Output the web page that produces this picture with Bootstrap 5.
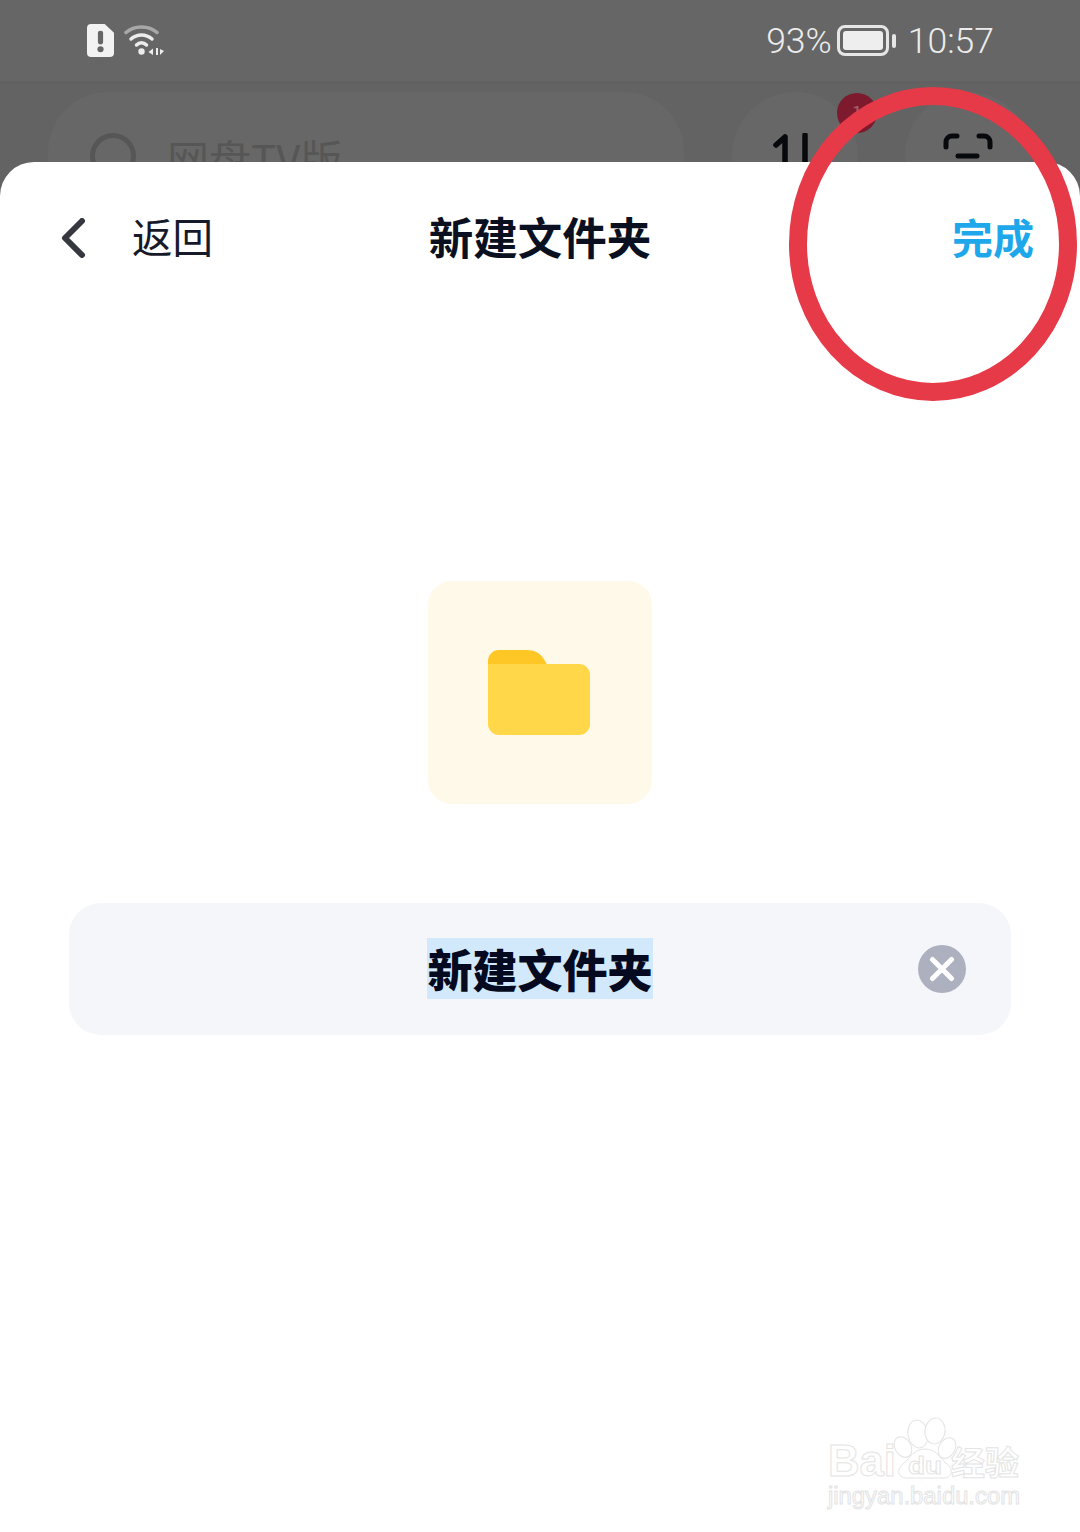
<!DOCTYPE html>
<html lang="zh-CN">
<head>
  <meta charset="UTF-8" />
  <title>新建文件夹</title>
  <link href="https://cdn.jsdelivr.net/npm/bootstrap@5.3.0/dist/css/bootstrap.min.css" rel="stylesheet" />
  <style>
    html, body { height: 1532px; overflow: hidden; }
    body { background: #636364; font-family: "Noto Sans CJK SC", "Noto Sans", sans-serif; position: relative; }

    /* status bar */
    .status-strip { height: 81px; background: #666; padding: 0 86px 0 87px; color: #ececec; }
    .status-txt { font-family: Roboto, sans-serif; font-weight: 300; font-size: 35.5px; line-height: 1; padding-top: 3px; }
    .wifi-icon { margin-left: 10px; }
    .batt-box { width: 52px; height: 31px; border: 3px solid #e6e6e6; border-radius: 8px; padding: 3px; margin: 0 3px 0 5px; }
    .batt-fill { background: #eee; border-radius: 3px; height: 100%; }
    .batt-nub { width: 4px; height: 14px; background: #e6e6e6; border-radius: 2px; margin-right: 12px; }

    /* app dimmed behind the sheet */
    .behind-row { height: 81px; overflow: hidden; padding: 8px 0 0 48px; border-top: 3px solid #616162; }
    .search-pill { width: 636px; height: 130px; border-radius: 60px; background: #676767; padding: 41px 0 0 42px; color: #565656; font-size: 42px; line-height: 1.2; flex: none; }
    .search-ring { width: 46px; height: 46px; border: 5px solid #565656; border-radius: 50%; margin-right: 31px; flex: none; }
    .round-btn { width: 126px; height: 126px; border-radius: 50%; background: #676767; flex: none; padding-top: 41px; }
    .round-one { margin-left: 48px; }
    .round-two { margin-left: 47px; }
    .red-dot { position: absolute; left: 837px; top: 93px; width: 40px; height: 40px; border-radius: 50%; background: #7d1a2e; color: #a55c6a; font-size: 20px; line-height: 40px; text-align: center; }

    /* sheet */
    .sheet { height: 1370px; background: #fff; border-radius: 34px 34px 0 0; position: relative; }
    .sheet-head { height: 152px; padding: 0 46px; }
    .head-side { flex: 1 1 0; }
    .back-arrow { margin-left: 14px; }
    .back-txt { font-size: 40.5px; color: #16192a; margin: 0 0 4px 46px; line-height: 1; }
    .sheet-title { font-size: 44.5px; font-weight: 700; color: #0b1020; line-height: 1; margin-bottom: 4px; }
    .done-txt { font-size: 41px; font-weight: 700; color: #1ea7ea; line-height: 1; margin-bottom: 3px; }
    .folder-tile { width: 224px; height: 223px; margin: 267px auto 99px; background: #fff9ea; border-radius: 24px; }
    .name-box { height: 132px; margin: 0 69px; background: #f4f6fa; border-radius: 32px; position: relative; }
    .name-sel { background: #d2e9fb; font-size: 45px; font-weight: 900; color: #050a20; line-height: 61px; height: 61px; margin-bottom: 2px; }
    .clear-btn { position: absolute; right: 45px; top: 42px; width: 48px; height: 48px; border-radius: 50%; background: #adb0bf; }

    /* overlays */
    .mark-ring { position: absolute; left: 780px; top: 80px; }
    .wm-logo { position: absolute; left: 820px; top: 1410px; }
    .wm-logo text { fill: #fff; stroke: #e4e4e4; stroke-width: 1; font-family: "Liberation Sans", sans-serif; }
  </style>
</head>
<body>

  <!-- status bar -->
  <div class="status-strip d-flex align-items-center justify-content-between">
    <div class="d-flex align-items-center">
      <svg width="27" height="33" viewBox="0 0 26 34" preserveAspectRatio="none">
        <path d="M4 0H17L26 9V30a4 4 0 0 1-4 4H4a4 4 0 0 1-4-4V4a4 4 0 0 1 4-4Z" fill="#f2f2f2"/>
        <rect x="10.500" y="7" width="5" height="14" rx="2.500" fill="#666"/>
        <circle cx="13" cy="26" r="3" fill="#666"/>
      </svg>
      <svg class="wifi-icon" width="40" height="34" viewBox="0 0 40 34" fill="none" stroke-linecap="round">
        <path d="M2 8.500C10 1 25 1 33 8.500" stroke="#a8a8a8" stroke-width="3.500"/>
        <path d="M7 15C13 9.500 22 9.500 28 15" stroke="#ececec" stroke-width="3.500"/>
        <path d="M12.500 21C15.500 18 19.500 18 22.500 21" stroke="#ececec" stroke-width="3.500"/>
        <circle cx="17.500" cy="27.500" r="3.200" fill="#ececec"/>
        <path d="M29 24.500V31L24.500 28ZM32 24H34V31H32ZM36 25V31L40 27Z" fill="#ececec"/>
      </svg>
    </div>
    <div class="d-flex align-items-center">
      <span class="status-txt">93%</span>
      <div class="batt-box"><div class="batt-fill"></div></div>
      <div class="batt-nub"></div>
      <span class="status-txt">10:57</span>
    </div>
  </div>

  <!-- dimmed app header -->
  <div class="behind-row d-flex">
    <div class="search-pill d-flex">
      <div class="search-ring"></div>
      <span>网盘TV版</span>
    </div>
    <div class="round-btn round-one d-flex justify-content-center">
      <svg width="44" height="60" viewBox="0 0 44 60" fill="none" stroke="#08090d" stroke-width="5.500" stroke-linecap="round">
        <path d="M12 4V50M3 12L12 4"/>
        <path d="M32 2V50"/>
      </svg>
    </div>
    <div class="round-btn round-two d-flex justify-content-center">
      <svg width="50" height="40" viewBox="0 0 50 40" fill="none" stroke="#08090d" stroke-width="5" stroke-linecap="round">
        <path d="M3 14V9a6 6 0 0 1 6-6H14M36 3H41a6 6 0 0 1 6 6V14M15 23H34"/>
      </svg>
    </div>
  </div>
  <div class="red-dot">1</div>

  <!-- sheet -->
  <div class="sheet">
    <div class="sheet-head d-flex align-items-center">
      <div class="head-side d-flex align-items-center">
        <svg class="back-arrow" width="26" height="40" viewBox="0 0 26 40" fill="none" stroke="#36383f" stroke-width="6" stroke-linecap="round" stroke-linejoin="round">
          <path d="M22 3L5 20L22 37"/>
        </svg>
        <span class="back-txt">返回</span>
      </div>
      <div class="sheet-title">新建文件夹</div>
      <div class="head-side d-flex justify-content-end">
        <span class="done-txt">完成</span>
      </div>
    </div>

    <div class="folder-tile d-flex align-items-center justify-content-center">
      <svg width="104" height="88" viewBox="0 0 104 88">
        <path d="M0 18V12A11 11 0 0 1 11 1H39C49 1 55 6 60 18Z" fill="#fec725"/>
        <path d="M0 15H91A11 11 0 0 1 102 26V75A11 11 0 0 1 91 86H11A11 11 0 0 1 0 75Z" fill="#ffd748"/>
      </svg>
    </div>

    <div class="name-box d-flex align-items-center justify-content-center">
      <span class="name-sel">新建文件夹</span>
      <div class="clear-btn d-flex align-items-center justify-content-center">
        <svg width="26" height="26" viewBox="0 0 26 26" stroke="#fff" stroke-width="5" stroke-linecap="round">
          <path d="M3.500 3.500L22.500 22.500M22.500 3.500L3.500 22.500"/>
        </svg>
      </div>
    </div>
  </div>

  <!-- red hand-drawn annotation -->
  <svg class="mark-ring" width="300" height="330" viewBox="0 0 300 330" fill="none">
    <ellipse cx="153" cy="164" rx="135" ry="148" stroke="#e63a48" stroke-width="18"/>
  </svg>

  <!-- watermark -->
  <svg class="wm-logo" width="210" height="105" viewBox="0 0 210 105" fill="#fff" stroke="#e4e4e4" stroke-width="1">
    <text x="8" y="66" font-size="44" font-weight="700" textLength="68" lengthAdjust="spacingAndGlyphs">Bai</text>
    <ellipse cx="98" cy="24" rx="10" ry="14" transform="rotate(-10 98 24)"/>
    <ellipse cx="115" cy="21" rx="10" ry="13" transform="rotate(8 115 21)"/>
    <ellipse cx="83" cy="37" rx="8" ry="11" transform="rotate(-30 83 37)"/>
    <ellipse cx="127" cy="38" rx="8" ry="11" transform="rotate(30 127 38)"/>
    <path d="M105 39C94 39 90 48 84 53C76 59 77 68 87 68H123C133 68 134 59 126 53C120 48 116 39 105 39Z"/>
    <text x="88" y="64" font-size="24" font-weight="700" textLength="34" lengthAdjust="spacingAndGlyphs">du</text>
    <text x="131" y="65" font-size="33" font-weight="700" style="font-family:'Noto Sans CJK SC',sans-serif" textLength="68" lengthAdjust="spacingAndGlyphs">经验</text>
    <text x="8" y="94" font-size="23" textLength="192" lengthAdjust="spacingAndGlyphs">jingyan.baidu.com</text>
  </svg>

  <script src="https://cdn.jsdelivr.net/npm/bootstrap@5.3.0/dist/js/bootstrap.bundle.min.js"></script>
</body>
</html>
